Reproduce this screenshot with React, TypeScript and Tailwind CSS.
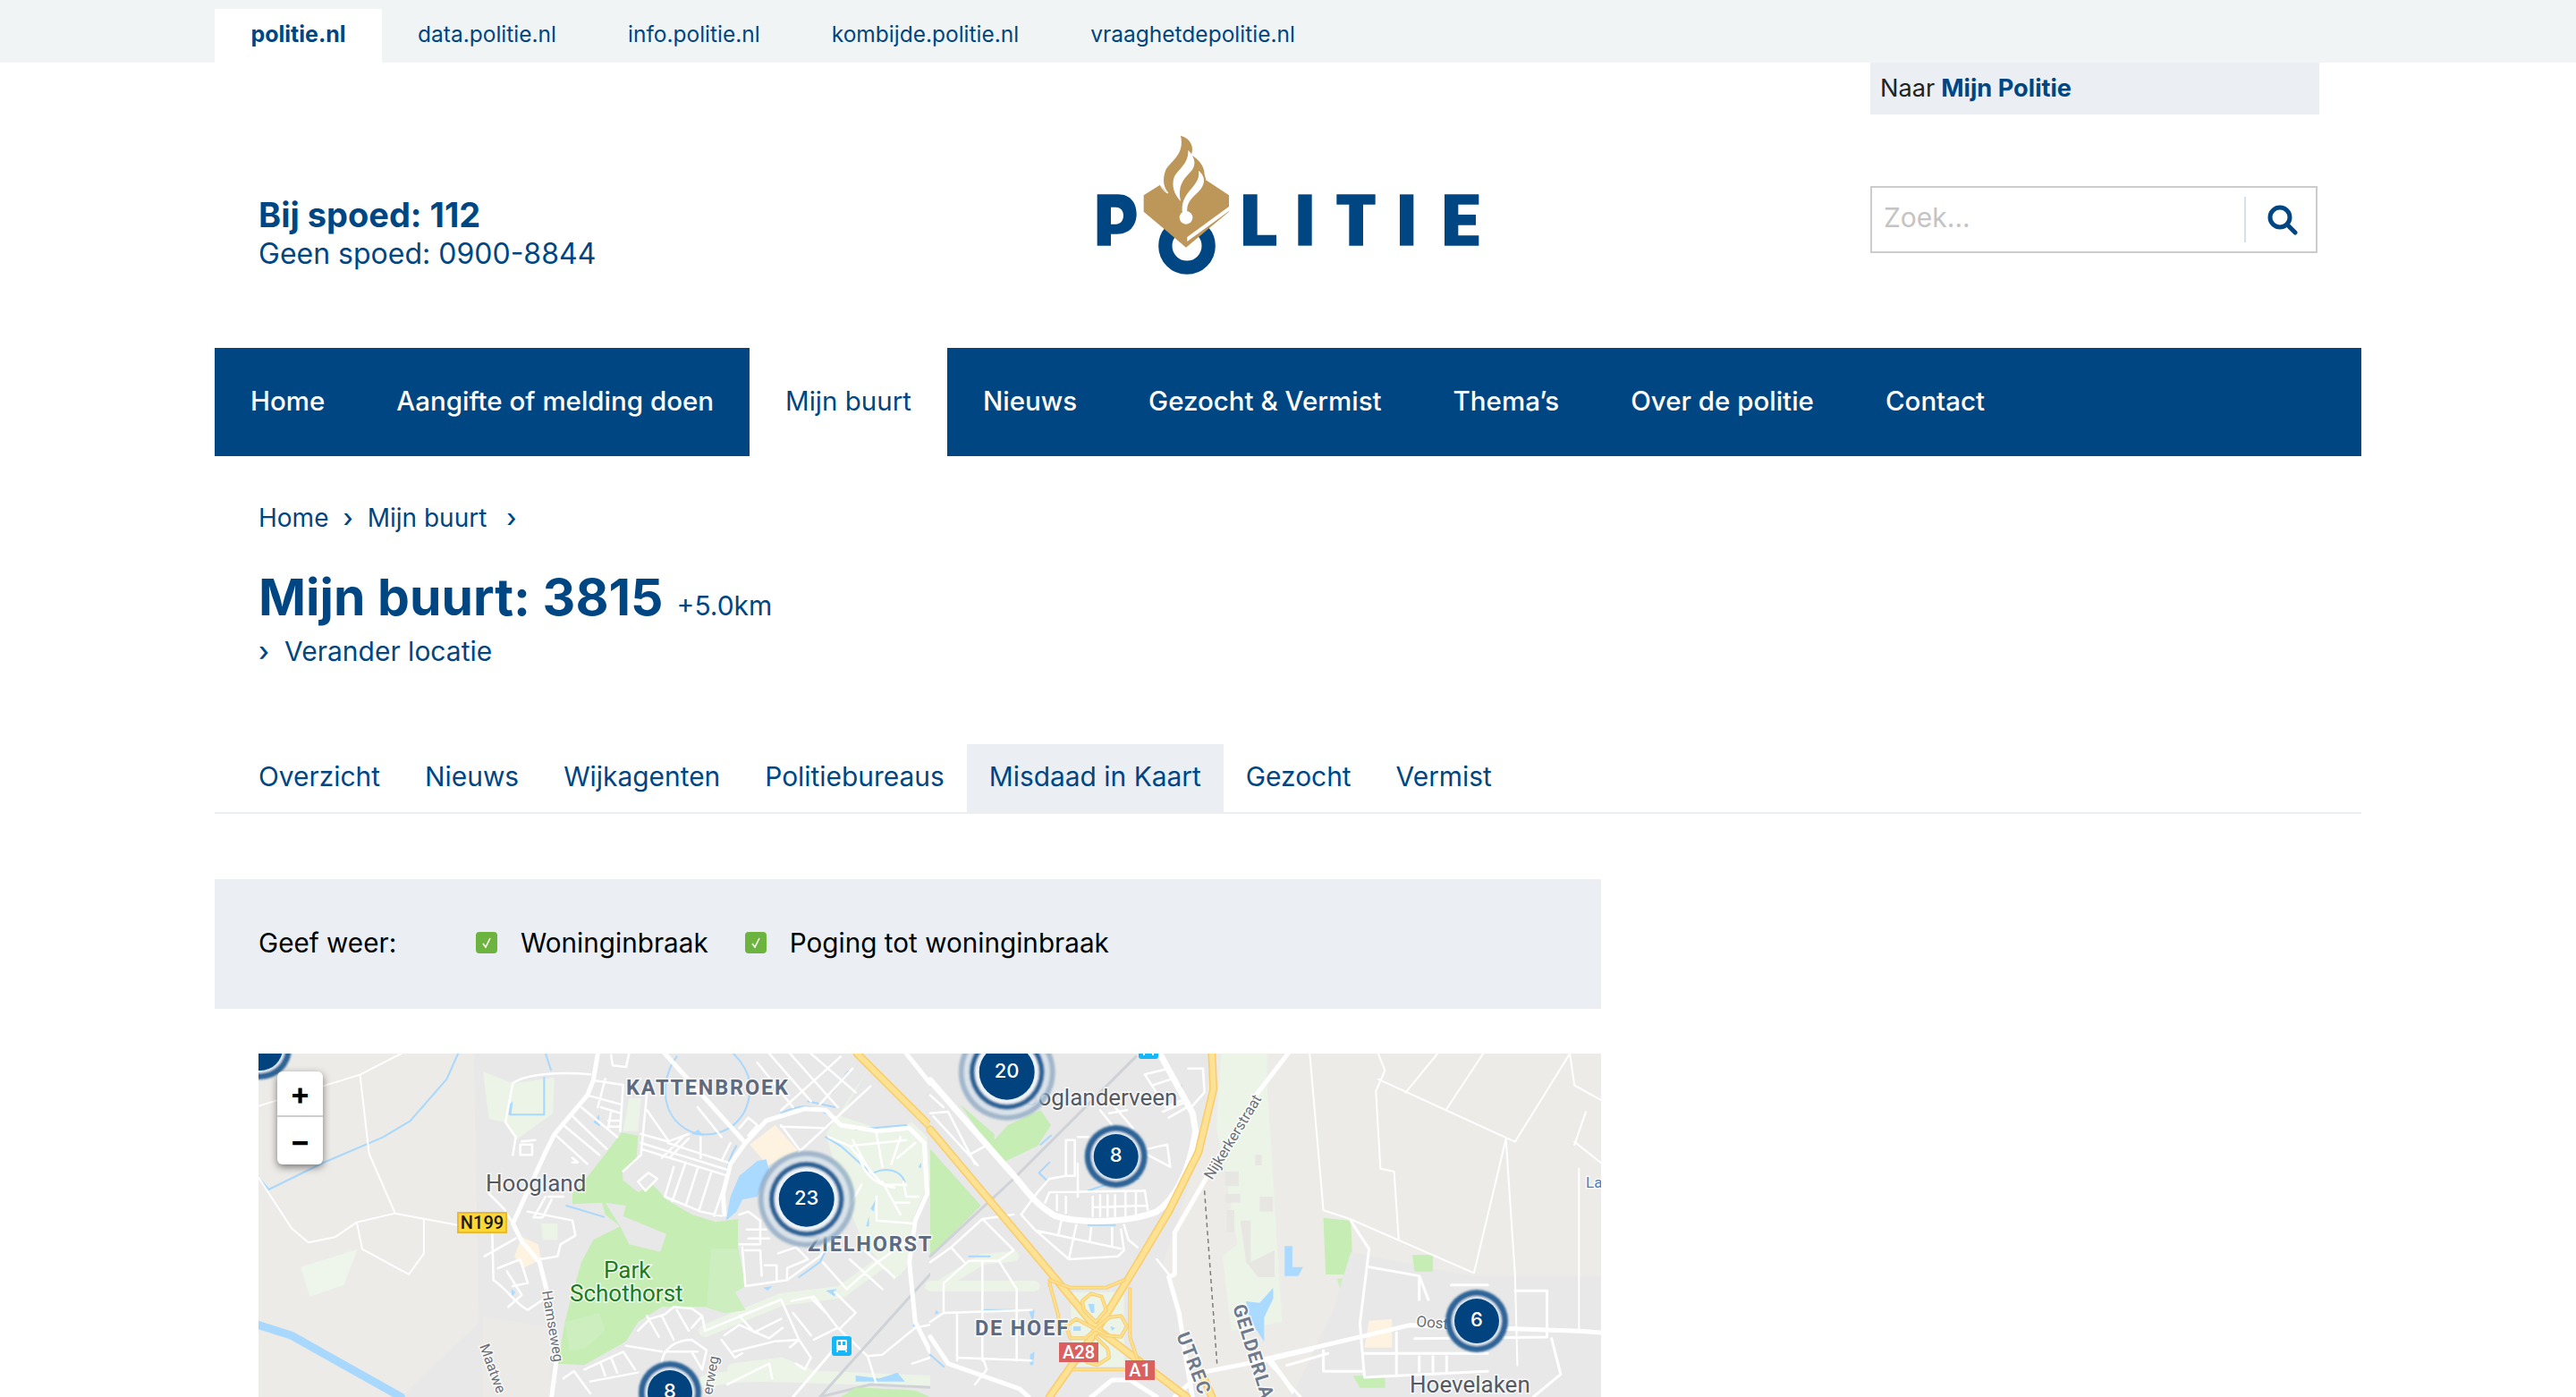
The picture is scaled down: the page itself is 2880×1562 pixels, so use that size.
import React from "react";

const siteTabs = [
  { label: "data.politie.nl" },
  { label: "info.politie.nl" },
  { label: "kombijde.politie.nl" },
  { label: "vraaghetdepolitie.nl" },
];
const navItems = ["Home", "Aangifte of melding doen", "Mijn buurt", "Nieuws", "Gezocht & Vermist", "Thema’s", "Over de politie", "Contact"];
const subTabs = ["Overzicht", "Nieuws", "Wijkagenten", "Politiebureaus", "Misdaad in Kaart", "Gezocht", "Vermist"];

const Logo = () => (
  <svg width="510" height="200" viewBox="0 0 1530 600" className="block">
    <g fill="#004682">
      <path fillRule="evenodd" d="M230 262H300C345 262 362 295 362 328C362 365 340 395 296 395H276V434H230ZM276 305V362H292C310 362 318 348 318 333C318 318 310 305 292 305Z" />
      <path d="M720 262H767V398H831V434H720Z" />
      <path d="M904 262H950V434H904Z" />
      <path d="M1033 262H1163V296H1122V434H1075V296H1033Z" />
      <path d="M1245 262H1291V434H1245Z" />
      <path d="M1395 262H1510V296H1441V330H1500V365H1441V400H1510V434H1395Z" />
    </g>
    <circle cx="531" cy="435" r="72.5" fill="none" stroke="#004682" strokeWidth="46" />
    <path fill="#bd9659" d="M386 265L441 230L465 258L597 215L672 265V320L528 440L386 320Z" />
    <path fill="#bd9659" d="M510 65C545 75 556 105 545 130C565 140 590 165 590 195C592 205 596 212 597 225L530 320L470 258C452 240 448 210 460 180C475 150 525 130 510 65Z" />
    <path fill="none" stroke="#fff" strokeWidth="3" d="M441 228C448 245 456 254 468 258" />
    <path fill="#fff" d="M535 113C560 140 565 165 540 190C515 215 500 240 510 285C490 265 478 235 488 205C498 180 538 160 535 113Z" />
    <path fill="#fff" d="M570 182C598 205 592 235 562 260C535 285 530 300 532 325H516C512 295 520 275 540 250C560 225 575 210 570 182Z" />
    <circle cx="528" cy="340" r="22" fill="#fff" />
    <path fill="#fff" d="M672 303L532 405V420L672 318Z" />
  </svg>
);

const Marker = ({ x, y, n, big }: { x: number; y: number; n: string; big?: boolean }) =>
  big ? (
    <g>
      <g filter="url(#soft)">
        <circle cx={x} cy={y} r="54" fill="#7c9dbd" opacity="0.65" />
        <circle cx={x} cy={y} r="48" fill="#e6edf3" opacity="0.8" />
        <circle cx={x} cy={y} r="42" fill="#2f6598" />
        <circle cx={x} cy={y} r="36" fill="#eef3f7" />
      </g>
      <circle cx={x} cy={y} r="31" fill="#00437f" />
      <text x={x} y={y + 6.5} textAnchor="middle" fill="#fff" fontSize="22" fontWeight="500" fontFamily="Inter, sans-serif">{n}</text>
    </g>
  ) : (
    <g>
      <g filter="url(#soft)">
        <circle cx={x} cy={y} r="35" fill="#2f6598" />
        <circle cx={x} cy={y} r="28" fill="#dfe8f0" />
      </g>
      <circle cx={x} cy={y} r="25" fill="#00437f" />
      <text x={x} y={y + 5.5} textAnchor="middle" fill="#fff" fontSize="22" fontWeight="500" fontFamily="Inter, sans-serif">{n}</text>
    </g>
  );

const Label = ({ x, y, size = 26, color = "#5a5f66", bold, spacing, rotate, children }: { x: number; y: number; size?: number; color?: string; bold?: boolean; spacing?: number; rotate?: number; children: string }) => (
  <text
    x={x}
    y={y}
    fontSize={size}
    fill={color}
    fontWeight={bold ? 700 : 400}
    fontFamily="Roboto, sans-serif"
    letterSpacing={spacing ?? 0}
    stroke="#fff"
    strokeOpacity="0.75"
    strokeWidth="3"
    paintOrder="stroke"
    transform={rotate ? `rotate(${rotate} ${x} ${y})` : undefined}
  >
    {children}
  </text>
);

const Shield = ({ x, y, w, h, text, bg, border, color }: { x: number; y: number; w: number; h: number; text: string; bg: string; border: string; color: string }) => (
  <g>
    <rect x={x + 1} y={y + 1} width={w - 2} height={h - 2} fill={bg} stroke={border} strokeWidth="2" />
    <text x={x + w / 2} y={y + h / 2 + 7} textAnchor="middle" fontSize="20" fontFamily="Roboto, sans-serif" fontWeight="500" fill={color}>{text}</text>
  </g>
);

const BusStop = ({ x, y }: { x: number; y: number }) => (
  <g>
    <rect x={x} y={y} width="22" height="22" rx="3" fill="#17b6f7" />
    <rect x={x + 5} y={y + 4} width="12" height="12" rx="2" fill="#fff" />
    <rect x={x + 7} y={y + 6} width="3" height="4" fill="#17b6f7" />
    <rect x={x + 12} y={y + 6} width="3" height="4" fill="#17b6f7" />
    <path d={`M${x + 6} ${y + 16}v2M${x + 16} ${y + 16}v2`} stroke="#fff" strokeWidth="2" />
  </g>
);

// traced from crops of the map, each group maps crop pixels back on the page
const westCrop = "translate(280 -18) scale(0.5102 0.3333)";
const eastCrop = "translate(1000 -18) scale(0.5102 0.3333)";
const cropA = "translate(540 0) scale(0.3333)";
const cropB = "translate(1040 0) scale(0.3333)";

const Roads = ({ d, w, c = "#fff" }: { d: string; w: number; c?: string }) => (
  <path d={d} fill="none" stroke={c} strokeWidth={w} strokeLinejoin="round" strokeLinecap="round" vectorEffect="non-scaling-stroke" />
);

const MapPicture = () => (
  <svg width="1501" height="384" viewBox="289 0 1501 384" className="block">
    <defs>
      <filter id="soft" x="-10%" y="-10%" width="120%" height="120%">
        <feGaussianBlur stdDeviation="0.8" />
      </filter>
    </defs>
    <rect x="289" y="0" width="1501" height="384" fill="#ecebe8" />

    <g transform={westCrop}>
      <path fill="#e8e8e8" d="M490 54H530V1206H330L500 960Z" />
      <path fill="#eef5ea" d="M110 770L235 710L205 830L130 870Z" />
      <Roads w={2} c="#a8d8fd" d="M18 470L40 510L160 420L290 335L350 280L430 140L455 54" />
      <Roads w={9} c="#a8d8fd" d="M18 965L90 1000L330 1206" />
      <Roads w={2} d="M18 230L240 125L330 54M240 125L260 390L317 590L233 620L185 670L127 688L90 640L18 470M317 590L455 630M233 620L245 710L347 795L380 725V610" />
    </g>

    <g transform={cropA}>
      <path fill="#e8e8e8" d="M0 0H1500V1152H0Z" />
      <path fill="#ebeae7" d="M0 880L230 920L225 1152H0Z" />
      <path fill="#ebf4e7" d="M0 60L100 100L240 80L235 200L110 290L75 230L20 220ZM490 150H530L520 260H470ZM195 570H250V625H200ZM1300 40L1200 210L1350 260L1440 230L1490 280L1500 420L1440 560L1420 720L1380 760L1270 620L1210 480L1150 270Z" />
      <Roads w={14} c="#ebf4e7" d="M745 930L1000 825L1200 800L1420 640M745 1100C900 1060 1100 1090 1500 1100M840 1060L1000 1040L1100 1080" />
      <path fill="#c5edb4" d="M465 265L520 275L515 350L468 400L470 425L520 465L570 440L615 490L700 540L780 565L855 555L855 650L880 780L845 800L880 860L810 870L745 850L600 850L520 900L480 965L340 1045L250 1040L275 900L290 840L330 700L370 625L460 580L410 540L400 500L300 505L300 470L345 420L400 350Z" />
      <path fill="#cdeebf" d="M275 900L390 870L410 930L340 990L290 995ZM750 850L765 655L855 655L880 780L845 800L880 860L810 870Z" />
      <path fill="#e8e8e8" d="M410 500L480 510L470 545L615 605L595 665L490 640L460 580Z" />
      <path fill="#fdf3e0" d="M980 240L1055 325L955 375L895 305ZM130 615L185 640L195 690L135 720L105 680Z" />
      <path fill="#aadaff" d="M950 355L920 360L860 410L830 480L815 560L850 530L870 490L920 480L960 390ZM370 230L390 205L392 245ZM95 790L108 800L98 815ZM700 270L722 255L740 275ZM1250 1080L1330 1090L1390 1070L1415 1100H1250ZM1440 915L1455 895L1458 915ZM90 170L100 160L95 205H85ZM1150 795L1185 790L1180 815ZM940 785L970 780L955 795ZM1460 380L1470 365V385ZM1300 520L1318 490L1310 530ZM1285 580L1295 545V580Z" />
      <Roads w={2} c="#a8d8fd" d="M650 10C590 90 590 230 720 270C820 280 900 220 895 100C890 60 870 30 840 0M850 310C830 340 810 400 815 440M1000 200C1060 170 1100 170 1150 200M1150 280L1200 310L1300 400M1310 400C1350 380 1400 390 1415 430M280 510L405 548M205 80V205L90 205M210 0L228 55M1160 640L1130 700L1060 750M1250 255L1420 240M1090 160L1180 180M1225 60L1170 130" />
      <Roads w={2.5} d="M100 100C140 70 250 60 360 70M100 100L75 230L110 280L100 340M130 295L175 290M125 305H165V340H125ZM370 90L470 105L460 260M430 5L435 40L480 45L490 0M350 140L460 170M410 85L385 180M240 270L350 370M270 240L390 340M300 210L415 320M330 180L450 280M395 180L460 200M430 190L420 250M420 225H460M420 245H460M300 350L318 365L300 365" />
      <Roads w={2.5} d="M530 300L820 390M530 320L820 410M550 130L530 340M550 190L620 290M530 270L620 295L690 270M640 380L610 480M680 365L635 495M720 385L680 510M765 400L725 525M820 410L775 545M610 480L730 530L800 545M600 350L670 280M630 345L690 285M730 280V350M620 300L820 365M830 300L800 360M520 430L555 400L585 420L545 460ZM470 395L530 340M720 180L800 280M860 250L890 215L920 240L890 275" />
      <Roads w={2.5} d="M920 30L1040 180M960 0L1100 160M1030 0L1190 180M1100 0L1250 130M1200 10L1000 190M1240 50L1130 170M1000 240L1060 320M1000 245L1140 250M1060 330L1300 110" />
      <Roads w={2.5} d="M1160 280L1230 310L1420 290M1240 290L1300 400M1320 270L1340 380M1400 280L1370 370M1450 300L1390 350M1230 310L1340 440L1420 440M1260 340C1280 420 1330 440 1380 450M1410 430L1420 480H1460M1320 480V560L1440 570M1380 500H1430M1340 430L1400 540M1270 440L1230 510" />
      <Roads w={2.5} d="M860 540L890 530L930 560V640H860M870 650L880 780L1020 760L1130 680L1160 640M885 590H950M890 620H960M880 660H930L935 745M945 710H985V765M990 670L1050 650L1090 690L1020 720V755M1140 700L1220 790L1310 710L1420 630M1230 690L1340 790M1280 660L1380 750" />
      <Roads w={2.5} d="M745 930L1000 825L1060 960L1030 985M810 945L860 910L960 955M860 880L910 935L1000 890M960 955L1005 920M800 960L845 1020L870 1005M840 1000L980 965L1060 960M1035 830L1110 815L1190 920L1110 960M1040 870L1100 945M1100 820L1150 870M1190 920L1290 1015L1340 1010M1060 960L1100 1020L1080 1060L1050 1040M1180 800L1250 870L1200 920M1290 1015L1320 1110M1340 1010L1450 920L1500 910M1440 1040L1500 1020" />
      <Roads w={2.5} d="M520 930L560 890L610 875L640 850L700 855L735 880L745 930M550 880L590 950M600 880L640 960M650 860L690 930M735 880L700 920M340 1060L470 1000L510 1060M395 1040L410 1080M430 1020L450 1070M480 980L600 1000M600 1040C600 990 650 960 700 960L750 995L735 1060L700 1000M610 1000H720M270 1090L305 1065L360 1140M360 1100L520 1070M820 1110L960 1040L970 1090" />
      <Roads w={2.5} d="M30 560L35 760C80 790 110 840 150 860L210 820M50 720L125 690L150 770L100 780M80 730L130 810L85 850M5 680L110 620M150 530L300 560L310 610L260 640L250 680L190 690M210 480L170 550H200L230 490M20 470L70 520L100 570M220 480L270 480" />
      <Roads w={3} c="#cfd2d6" d="M1500 740L1130 1152M1130 1152L1300 1110L1500 1120" />
      <path fill="#c5edb4" d="M1200 1152L1250 1120L1450 1130L1500 1152Z" />
      <Roads w={3} d="M1170 1000L1040 1152" />
      <Roads w={5} d="M385 0L370 90L350 140L240 270L210 330L100 570L130 630L190 700L215 800L245 1040L230 1152M610 0L880 300M810 540L805 470L830 370L880 300L950 225L1080 185L1150 190L1200 240L1320 260L1430 250L1480 300L1490 470L1450 560L1430 700L1450 900L1500 1000M1420 0L1500 100" />
      <Roads w={9} c="#f9cc6a" d="M1255 0L1500 245" />
      <Roads w={6} c="#fde293" d="M1255 0L1500 245" />
    </g>

    <g transform={cropB}>
      <path fill="#e8e8e8" d="M0 0H950L880 400L800 650L780 700L830 900L900 1152H0Z" />
      <path fill="#ebf4e7" d="M975 0H1130V100L1180 900L1010 930L980 680L1030 640L990 400L960 250ZM470 800H650V1050H480Z" />
      <path fill="#e7e6e3" d="M1090 340H1112V375H1090ZM990 395H1035V445H990ZM990 470H1040V500H990ZM1105 480H1150V530H1105ZM995 525H1020V600H995ZM1040 560H1075V700L1155 660V750H1100L1060 700Z" />
      <Roads w={12} c="#ebf4e7" d="M0 780H350M45 770L175 690L280 680" />
      <path fill="#c5edb4" d="M0 320L170 510L0 680ZM100 170L215 270V290L260 240L370 190L405 240L360 310L235 370L190 300Z" />
      <path fill="#aadaff" d="M825 110L845 105L845 160ZM20 860L30 870L15 875ZM335 1010L350 1000L345 1045H335ZM330 860L350 860L345 905ZM530 840H550V870H540ZM480 915H505L505 930H480ZM605 915L620 920L610 930Z" />
      <Roads w={2} c="#a8d8fd" d="M130 680H200M530 460L620 430L700 420M365 400L400 365M365 400L395 430M370 305L405 275M380 520L450 550M530 575H620M0 1010L45 1050M180 860H280" />
      <Roads w={3} c="#cfd2d6" d="M0 680L280 420L690 10" />
      <Roads w={2.5} d="M0 200L60 195L150 370M0 140L45 180M10 210L130 340L160 375M130 340L185 310M720 70L800 50M720 70L790 180L860 150M750 105L810 85M800 215L870 175M780 195L850 165M865 50H915L920 130L880 175M570 190L610 240V270M620 180L680 250M600 200L660 190M455 290H485V410H455ZM495 280H530M495 370V480M730 320L795 305L805 380L730 340M455 410L400 420L360 465L305 540L350 590L465 690L630 680L650 660M545 480V545M570 475V545M595 475V545M620 475V545M655 465V545M690 465V540M720 460L730 525M545 515L725 510M400 465L385 500M425 475V525M455 480V535M360 595L640 655M440 560L430 605M490 575L465 690M540 585L535 630M610 585V645M640 590L650 660M650 575L665 625L695 650M760 690L800 740M400 465L720 460" />
      <Roads w={2.5} d="M280 540L175 555L70 650L0 700M70 650L115 700M175 555L280 660L230 695H130L45 770V870L0 900M175 695V1030M230 695L290 790V1030M45 870L340 860M90 875V1030M90 1020L340 1030M180 1030L190 1060L150 1110" />
      <Roads w={5} d="M0 950L60 1040L300 1125L330 1152" />
      <Roads w={7} d="M0 90L290 420C330 470 360 510 420 545C500 570 660 570 760 530C820 490 870 400 890 260L880 200L770 0" />
      <Roads w={5} d="M1200 0L1100 130L930 410L820 600V740L800 750L835 870L860 1040L880 1152M820 1152L910 1070L1140 1025L1500 940M1140 1025L1230 1152M540 1152L610 1095H670L760 1152" />
      <path fill="none" stroke="#7d7d7d" strokeWidth="1.5" strokeDasharray="5 4" vectorEffect="non-scaling-stroke" d="M920 460L962 1040" />
      <Roads w={9} c="#f9cc6a" d="M0 255L420 755L560 925L860 1152M945 0L950 120L900 330L800 530L680 730L560 925L400 1152M910 1070L945 1152" />
      <Roads w={6} c="#fde293" d="M0 255L420 755L560 925L860 1152M945 0L950 120L900 330L800 530L680 730L560 925L400 1152M910 1070L945 1152" />
      <Roads w={4} c="#f9cc6a" d="M400 760L470 785H590L650 760M400 770L430 880V925M670 790V950L700 1040M480 1060H650M510 830L540 805L575 815L590 860L555 900L515 860ZM555 925L600 885L640 880L660 915L640 950L590 945ZM555 925L490 890L455 915L470 955L520 955ZM555 950L595 990L600 1020L560 1045L525 1035" />
      <Roads w={2} c="#fde293" d="M400 760L470 785H590L650 760M400 770L430 880V925M670 790V950L700 1040M480 1060H650M510 830L540 805L575 815L590 860L555 900L515 860ZM555 925L600 885L640 880L660 915L640 950L590 945ZM555 925L490 890L455 915L470 955L520 955ZM555 950L595 990L600 1020L560 1045L525 1035" />
    </g>

    <g transform={eastCrop}>
      <path fill="#c5edb4" d="M940 605L1000 615L1005 795H945Z" />
      <path fill="#cdeebc" d="M970 810L1010 800V890H985Z" />
      <path fill="#e8e8e8" d="M1000 720L1260 800H1548V1206H870L960 920Z" />
      <path fill="#c5edb4" d="M1135 730H1180V785H1140ZM1005 1135H1075V1175H1020Z" />
      <path fill="#fdf3e0" d="M1040 950L1090 945V1040H1030Z" />
      <path fill="#aadaff" d="M855 700H872V770H895L885 800H855ZM770 885L800 890L830 840L830 875L810 940V1020L780 950Z" />
      <Roads w={2} d="M910 54L940 580L1000 610L1270 790L1340 340M1060 54L1075 110L1055 180L1065 440L1095 450L1105 680M1060 140L1360 350M1120 185L1190 54M1210 240L1290 54M1360 350L1480 54M1480 54L1490 160L1548 210M1340 340L1360 800L1365 1100M1490 360L1515 250M1490 350L1548 420M1500 440V980" />
      <Roads w={3} d="M1000 615L1040 710L1020 960L1030 1140L1300 1120M1040 770L1150 800L1170 880M1150 800V880M1030 1060H1300M1100 990V1130M1220 830H1300M1360 850H1430V1000M1140 1010L1430 1005M1150 1070V1120M1180 1070V1120M1210 1070V1120M940 1050V1120H1030M860 1100L950 1060M1440 1010L1460 1130L1400 1206" />
      <Roads w={5} d="M810 1080L1130 965L1500 985L1548 990" />
      <Roads w={3} d="M820 1090L890 1206" />
    </g>

    <Label x={700} y={46} size={23.5} bold spacing={1.8} color="#5d6a80">KATTENBROEK</Label>
    <Label x={543} y={154} color="#555a62">Hoogland</Label>
    <Label x={675} y={251} color="#1f7a1f">Park</Label>
    <Label x={637} y={277} color="#1f7a1f">Schothorst</Label>
    <Label x={903} y={221} size={23.5} bold spacing={1.8} color="#5d6a80">ZIELHORST</Label>
    <Label x={1090} y={315} size={23.5} bold spacing={1.8} color="#5d6a80">DE HOEF</Label>
    <Label x={1127} y={58} color="#555a62">Hooglanderveen</Label>
    <Label x={1576} y={379} color="#555a62">Hoevelaken</Label>
    <Label x={1583} y={305} size={17} rotate={5} color="#6a6f76">Oosterstraat</Label>
    <Label x={1355} y={142} size={16.5} rotate={-58.6} color="#6a6f76">Nijkerkerstraat</Label>
    <Label x={1378} y={283} size={21} bold spacing={1} rotate={72.6} color="#6f7a8c">GELDERLA</Label>
    <Label x={1315} y={315} size={21} bold spacing={1.5} rotate={69} color="#6f7a8c">UTREC</Label>
    <Label x={606} y={266} size={16} rotate={80.5} color="#6a6f76">Hamseweg</Label>
    <Label x={536} y={327} size={16} rotate={70} color="#6a6f76">Maatwe</Label>
    <Label x={796} y={382} size={16} rotate={-80} color="#6a6f76">erweg</Label>
    <Label x={1773} y={150} size={17} color="#4a80c0">La</Label>
    <Shield x={511} y={177} w={56} h={24} text="N199" bg="#fdd835" border="#e8b93a" color="#1a1a1a" />
    <Shield x={1184} y={323} w={44} h={22} text="A28" bg="#da6060" border="#da6060" color="#fff" />
    <Shield x={1258} y={343} w={33} h={22} text="A1" bg="#da6060" border="#da6060" color="#fff" />
    <BusStop x={930} y={316} />
    <BusStop x={1273} y={-16} />
    <Marker x={291} y={-6} n="" />
    <Marker x={901.7} y={162.7} n="23" big />
    <Marker x={1125.7} y={20.7} n="20" big />
    <Marker x={1247.7} y={115} n="8" />
    <Marker x={1651} y={299} n="6" />
    <Marker x={749} y={379} n="8" />
  </svg>
);

const Check = () => (
  <span className="flex h-[24px] w-[24px] items-center justify-center rounded-[4px] bg-[#6db33f]">
    <svg width="12" height="14" viewBox="0 0 12 14">
      <path d="M2 8l3 4 5-10" fill="none" stroke="#fff" strokeWidth="1.6" />
    </svg>
  </span>
);

export default function App() {
  return (
    <div className="h-[1562px] overflow-hidden bg-white font-['Inter',sans-serif] text-[#004682]">
      <div className="h-[70px] bg-[#f0f4f5]">
        <div className="mx-auto flex h-full w-[2400px] items-end">
          <a className="flex h-[60px] w-[187px] items-center justify-center bg-white pb-[3px] text-[25px] font-bold">politie.nl</a>
          {siteTabs.map((tab) => (
            <a key={tab.label} className="flex h-[60px] items-center px-[40px] pb-[3px] text-[24.5px]">
              {tab.label}
            </a>
          ))}
        </div>
      </div>

      <header className="mx-auto flex h-[319px] w-[2400px] justify-between">
        <div className="pl-[49px] pt-[146px]">
          <div className="text-[38px] font-bold leading-[48px]">Bij spoed: 112</div>
          <div className="text-[32px] leading-[40px]">Geen spoed: 0900-8844</div>
        </div>
        <div className="absolute left-[1150px] top-[130px]">
          <Logo />
        </div>
        <div className="mr-[47px] w-[502px]">
          <div className="flex h-[58px] items-center bg-[#ebeff3] pl-[11px] text-[27.2px]">
            <span className="text-[#222]">Naar</span>
            <span className="ml-[7px] font-bold text-[#004682]">Mijn Politie</span>
          </div>
          <div className="mt-[80px] flex h-[75px] w-[500px] items-center border-2 border-[#ccc] bg-white">
            <span className="flex-1 pb-[5px] pl-[13px] text-[30px] text-[#c4c4c4]">Zoek...</span>
            <span className="h-[51px] w-[2px] bg-[#d6e0ea]" />
            <span className="flex w-[78px] justify-center pl-[4px]">
              <svg width="34" height="34" viewBox="0 0 34 34" fill="none" stroke="#004682" strokeWidth="5">
                <circle cx="14" cy="14" r="11" />
                <path d="M22 22l9 9" strokeLinecap="round" />
              </svg>
            </span>
          </div>
        </div>
      </header>

      <nav className="mx-auto flex h-[121px] w-[2400px] bg-[#004682]">
        {navItems.map((item) => (
          <a
            key={item}
            className={`flex items-center px-[40px] pb-[2px] text-[29.5px] ${item === "Mijn buurt" ? "bg-white text-[#004682]" : "font-medium text-white"}`}
          >
            {item}
          </a>
        ))}
      </nav>

      <main className="mx-auto w-[2400px]">
        <div className="pl-[49px]">
          <div className="mt-[49px] flex items-center text-[28px] leading-[40px]">
            <span>Home</span>
            <span className="mx-[16px] font-medium">›</span>
            <span>Mijn buurt</span>
            <span className="ml-[22px] font-medium">›</span>
          </div>
          <div className="mt-[31px] flex items-baseline">
            <h1 className="text-[57px] font-bold leading-[76px]">Mijn buurt: 3815</h1>
            <span className="ml-[15px] text-[30px]">+5.0km</span>
          </div>
          <div className="flex items-center text-[30px] leading-[44px]">
            <span className="w-[29px] font-medium">›</span>
            <span>Verander locatie</span>
          </div>
        </div>

        <div className="mt-[82px] flex h-[78px] border-b-2 border-[#ebeff3] pl-[24px]">
          {subTabs.map((tab) => (
            <a
              key={tab}
              className={`flex h-[76px] items-center px-[25px] pb-[3px] text-[29.9px] ${tab === "Misdaad in Kaart" ? "bg-[#ebeff3]" : ""}`}
            >
              {tab}
            </a>
          ))}
        </div>

        <div className="mt-[73px] flex h-[145px] w-[1550px] items-center bg-[#ebeff3] pb-[3px] pl-[49px] text-[29.7px] text-black">
          <span className="w-[243px]">Geef weer:</span>
          <Check />
          <span className="ml-[26px]">Woninginbraak</span>
          <span className="ml-[41px]">
            <Check />
          </span>
          <span className="ml-[26px]">Poging tot woninginbraak</span>
        </div>

        <div className="relative ml-[49px] mt-[50px] w-[1501px]">
          <MapPicture />
          <div className="absolute left-[21px] top-[20px] w-[51px] overflow-hidden rounded-[6px] bg-white shadow-[0_3px_8px_rgba(0,0,0,0.5)]">
            <div className="flex h-[51px] items-center justify-center border-b-2 border-[#ccc] text-[34px] font-bold leading-none text-black">+</div>
            <div className="flex h-[53px] items-center justify-center text-[34px] font-bold leading-none text-black">−</div>
          </div>
        </div>
      </main>
    </div>
  );
}
